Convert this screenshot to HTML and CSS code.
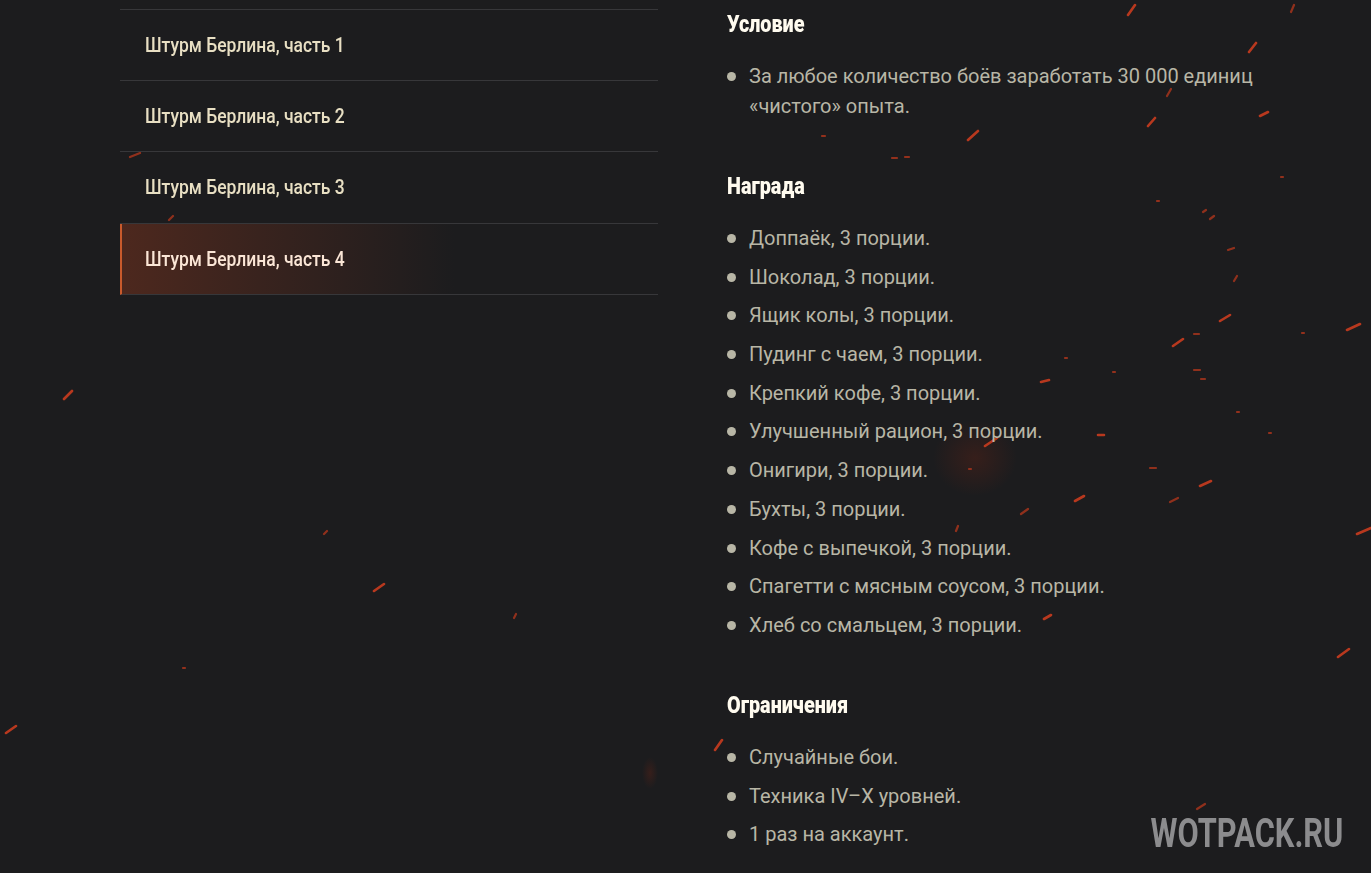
FILE: index.html
```html
<!DOCTYPE html>
<html lang="ru">
<head>
    <meta charset="UTF-8">
    <title>Штурм Берлина</title>
    <link rel="stylesheet" href="styles.css">
</head>
<body>

<svg class="sparks" viewBox="0 0 1371 873" aria-hidden="true">
    <defs>
        <radialGradient id="glow">
            <stop offset="0" stop-color="#6e2414" stop-opacity="0.32"/>
            <stop offset="1" stop-color="#6e2414" stop-opacity="0"/>
        </radialGradient>
    </defs>
    <ellipse cx="975" cy="458" rx="42" ry="38" fill="url(#glow)"/>
    <ellipse cx="650" cy="773" rx="8" ry="16" fill="url(#glow)"/>
    <g class="spark-bright">
        <path d="M1128 15l7-10M1249 52l7-9M968 140l10-9M1148 126l7-8M1260 116l8-4M1220 321l10-6M1173 346l10-7M1347 330l13-6M985 446l12-8M1200 486l11-5M1075 501l9-5M1357 534l14-6M1044 619l7-4M1338 657l11-8M64 399l8-8M374 591l10-7M6 733l10-7M715 750l7-10M1098 435h6M1041 382l8-2"/>
    </g>
    <g class="spark-dim">
        <path d="M1291 12l3-7M1167 96l4-7M1203 212l3-2M1210 219l4-3M1228 250l6-2M1234 281l3-5M1194 334h5M1194 370h6M1201 379h4M1150 468h6M1170 502l8-4M1021 514l7-5M956 531l2-5M324 534l3-3M130 157l10-4M169 220l4-4M482 264l5-4M1197 809l8-5M514 618l2-4"/>
    </g>
    <g class="spark-dots">
        <path d="M1281 177h2M1157 201h2M1302 333h2M1065 358h2M1113 372h2M1237 412h2M1269 433h2M969 469h2M183 668h2M822 136h3M892 158h5M905 157h4"/>
    </g>
</svg>

<div class="page">
    <nav class="parts">
        <a class="part" href="#"><span>Штурм Берлина, часть 1</span></a>
        <a class="part" href="#"><span>Штурм Берлина, часть 2</span></a>
        <a class="part" href="#"><span>Штурм Берлина, часть 3</span></a>
        <a class="part part-active" href="#"><span>Штурм Берлина, часть 4</span></a>
    </nav>

    <main class="details">
        <h2>Условие</h2>
        <ul>
            <li>За любое количество боёв заработать 30 000 единиц «чистого» опыта.</li>
        </ul>

        <h2>Награда</h2>
        <ul>
            <li>Доппаёк, 3 порции.</li>
            <li>Шоколад, 3 порции.</li>
            <li>Ящик колы, 3 порции.</li>
            <li>Пудинг с чаем, 3 порции.</li>
            <li>Крепкий кофе, 3 порции.</li>
            <li>Улучшенный рацион, 3 порции.</li>
            <li>Онигири, 3 порции.</li>
            <li>Бухты, 3 порции.</li>
            <li>Кофе с выпечкой, 3 порции.</li>
            <li>Спагетти с мясным соусом, 3 порции.</li>
            <li>Хлеб со смальцем, 3 порции.</li>
        </ul>

        <h2>Ограничения</h2>
        <ul>
            <li>Случайные бои.</li>
            <li>Техника IV–X уровней.</li>
            <li>1 раз на аккаунт.</li>
        </ul>
    </main>
</div>

<div class="watermark">WOTPACK.RU</div>

</body>
</html>
```

FILE: styles.css
```css
html, body {
    height: 100%;
}
body {
    margin: 0;
    background-color: #1c1c1e;
    font-family: 'Roboto', sans-serif;
    overflow: hidden;
}
.sparks {
    position: absolute;
    top: 0;
    left: 0;
    width: 1371px;
    height: 873px;
}
.sparks path {
    fill: none;
    stroke-linecap: round;
}
.spark-bright {
    stroke: #c93c1f;
    stroke-width: 2.6;
    opacity: 0.9;
    filter: blur(0.7px);
}
.spark-dim {
    stroke: #a5341c;
    stroke-width: 2.2;
    opacity: 0.85;
    filter: blur(0.7px);
}
.spark-dots {
    stroke: #93301c;
    stroke-width: 2.2;
    filter: blur(0.6px);
}
.page {
    position: relative;
    display: flex;
    padding: 9px 0 0 120px;
}
.parts {
    width: 538px;
    flex: none;
    display: flex;
    flex-direction: column;
    align-self: flex-start;
    border-top: 1px solid #37373a;
}
.part {
    display: flex;
    align-items: center;
    height: 69.2px;
    padding: 0 0 1px 25px;
    border-bottom: 1px solid #37373a;
    color: #e8dfc3;
    font-size: 20px;
    font-weight: 500;
    text-decoration: none;
}
.part span {
    display: inline-block;
    white-space: nowrap;
    transform: scaleX(0.874);
    transform-origin: left center;
}
.part-active {
    padding: 1px 0 0 23px;
    border-left: 2px solid #c95a2c;
    color: #fbe6d6;
    background: linear-gradient(90deg, #4d281e 0%, #1c1c1e 62%);
}
.details {
    margin-left: 69px;
    width: 560px;
    margin-top: -9px;
}
h2 {
    margin: 11px 0 0;
    color: #fffbef;
    font-size: 24px;
    font-weight: 900;
    line-height: 26px;
    transform: scaleX(0.825);
    transform-origin: left center;
}
ul {
    list-style: none;
    margin: 24px 0 52px;
    padding: 0;
}
li {
    position: relative;
    padding-left: 22px;
    margin-bottom: 8.7px;
    color: #b8b6a6;
    font-size: 20px;
    line-height: 30px;
}
li::before {
    content: "";
    position: absolute;
    left: 0;
    top: 11px;
    width: 9px;
    height: 9px;
    border-radius: 50%;
    background-color: #b8b6a6;
}
.watermark {
    position: absolute;
    right: 28px;
    bottom: 19px;
    color: #8c8c8e;
    font-size: 40px;
    font-weight: 700;
    line-height: 40px;
    white-space: nowrap;
    transform: scaleX(0.77);
    transform-origin: right center;
}
```
